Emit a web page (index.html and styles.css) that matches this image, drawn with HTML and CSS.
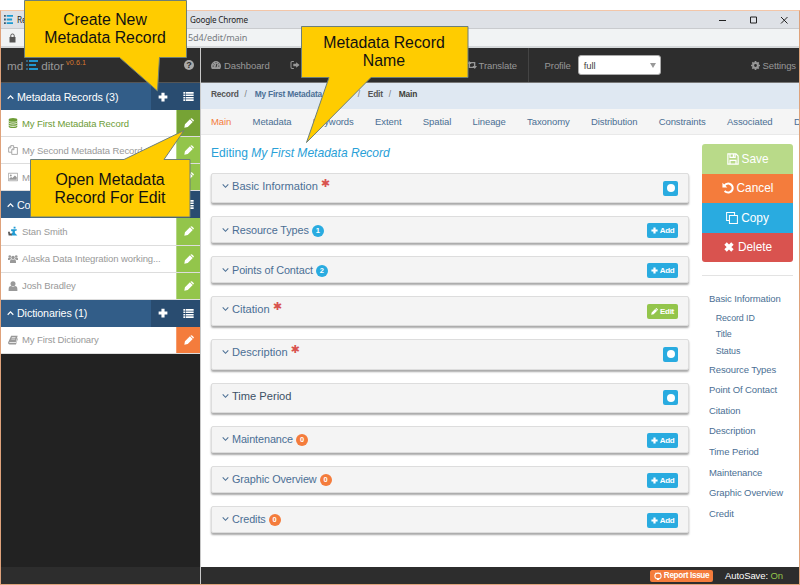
FILE: index.html
```
<!DOCTYPE html>
<html lang="en">
<head>
<meta charset="utf-8">
<title>mdEditor</title>
<link rel="stylesheet" href="styles.css">
</head>
<body>
<svg class="defs" aria-hidden="true">
  <symbol id="plus" viewBox="0 0 16 16"><path d="M5.500 1h5v4.500H15v5h-4.500V15h-5v-4.500H1v-5h4.500z"/></symbol>
  <symbol id="list" viewBox="0 0 16 14"><path d="M0 0h3v2.600H0zM4 0h12v2.600H4zM0 3.800h3v2.600H0zM4 3.800h12v2.600H4zM0 7.600h3v2.600H0zM4 7.600h12v2.600H4zM0 11.400h3V14H0zM4 11.400h12V14H4z"/></symbol>
  <symbol id="pencil" viewBox="0 0 16 16"><path d="M.5 15.500l1-5.500 8-8 4.500 4.500-8 8zM10.300 1.300l.8-.7q.9-.8 1.800 0l2.500 2.500q.8.900 0 1.800l-.7.800z"/></symbol>
  <symbol id="up" viewBox="0 0 10 8"><path d="M1 6.500L5 2.500l4 4" fill="none" stroke="currentColor" stroke-width="1.700"/></symbol>
  <symbol id="down" viewBox="0 0 10 8"><path d="M1 1.800L5 5.800l4-4" fill="none" stroke="currentColor" stroke-width="1.500"/></symbol>
  <symbol id="db" viewBox="0 0 16 16"><path d="M1 3q0-3 7-3t7 3-7 3-7-3zM1 5q2 2 7 2t7-2v1.500q0 2.500-7 2.500t-7-2.500zM1 8.500q2 2 7 2t7-2V10q0 2.500-7 2.500T1 10zM1 12q2 2 7 2t7-2v1q0 3-7 3t-7-3z"/></symbol>
  <symbol id="files" viewBox="0 0 16 16"><path d="M4.500 1H9v3M6 11.500H1V4.500L4.500 1v3.500H1M9.500 4H15v11H6V7.500zV7.500H6" fill="none" stroke="currentColor" stroke-width="1.300"/></symbol>
  <symbol id="image" viewBox="0 0 16 14"><path d="M.6 1h14.800v12H.6z" fill="none" stroke="currentColor" stroke-width="1.200"/><circle cx="4.500" cy="4.500" r="1.500"/><path d="M2 11.500V9.500l3-2.500 2 1.500 4-4 3 3v4z"/></symbol>
  <symbol id="user" viewBox="0 0 14 16"><circle cx="7" cy="4.200" r="4"/><path d="M0 16v-3q0-5 4-5 3 2 6 0 4 0 4 5v3z"/></symbol>
  <symbol id="users" viewBox="0 0 20 16"><circle cx="10" cy="5" r="3.500"/><circle cx="3.500" cy="3" r="2.600"/><circle cx="16.500" cy="3" r="2.600"/><path d="M4 16v-3q0-4.500 3.500-4.500 2.500 1.500 5 0Q16 8.500 16 13v3zM0 10V7q0-1.500 2-1.500h3.500L6 8q-2.500.5-3 2zM20 10V7q0-1.500-2-1.500h-3.500L14 8q2.500.5 3 2z"/></symbol>
  <symbol id="book" viewBox="0 0 16 16"><path d="M5 1h10.500L12.500 11H3q-1.500 0-1 1.500h11L15 5l1 .7-3 8.500q-.3.800-1 .8H2.500Q-.5 14.500.3 11.500z"/><path d="M6 4h6M5.300 6.500h6" stroke="#fff"/></symbol>
  <symbol id="gear" viewBox="0 0 16 16"><circle cx="8" cy="8" r="4.300" fill="none" stroke="currentColor" stroke-width="3.600"/><path d="M8 0v3M8 13v3M0 8h3M13 8h3M2.300 2.300l2.200 2.200M11.500 11.500l2.200 2.200M2.300 13.700l2.200-2.200M11.500 4.500l2.200-2.200" stroke="currentColor" stroke-width="3"/></symbol>
</svg>

<div class="window">
  <header class="titlebar">
    <svg class="favicon" viewBox="0 0 10 10"><path d="M0 0h2v2H0zM0 4h2v2H0zM0 8h2v2H0z" fill="#39576c"/><path d="M3 0h7v2H3zM3 4h6v2H3zM3 8h7v2H3z" fill="#1d9bd1"/></svg>
    <span class="win-title">Record - mdEditor</span><span class="win-app">Google Chrome</span>
    <svg class="win-controls" viewBox="0 0 70 10"><path d="M0 5.500h7M31.500 2h6v6h-6zM62 2l6.500 6.500M68.500 2L62 8.500" fill="none" stroke="#222"/></svg>
  </header>
  <div class="address">
    <svg class="lock" viewBox="0 0 8 10"><path d="M1 4h6v5.500H1z" fill="#555"/><path d="M2.300 4V2.500q0-1.500 1.700-1.500t1.700 1.500V4" fill="none" stroke="#555"/></svg>
    <span class="url">5d4/edit/main</span>
  </div>

  <div class="app">
    <aside class="sidebar">
      <div class="brand"><span>md</span>
        <svg class="logo" viewBox="0 0 12 12"><path d="M0 1h2v2H0zM0 5h2v2H0zM0 9h2v2H0z" fill="#36657f"/><path d="M3 1h9v2H3zM3 5h7v2H3zM3 9h9v2H3z" fill="#2295cc"/></svg>
        <span>ditor</span><sup>v0.6.1</sup><span class="help">?</span></div>

      <div class="group"><svg><use href="#up"/></svg><h2>Metadata Records (3)</h2><div class="tools"><svg class="add"><use href="#plus"/></svg><svg class="lst"><use href="#list"/></svg></div></div>
      <div class="row active"><svg><use href="#db"/></svg><span>My First Metadata Record</span><a class="pen"><svg><use href="#pencil"/></svg></a></div>
      <div class="row"><svg><use href="#files"/></svg><span>My Second Metadata Record</span><a class="pen"><svg><use href="#pencil"/></svg></a></div>
      <div class="row"><svg><use href="#image"/></svg><span>My Third Metadata Record</span><a class="pen"><svg><use href="#pencil"/></svg></a></div>

      <div class="group"><svg><use href="#up"/></svg><h2>Contacts (3)</h2><div class="tools"><svg class="add"><use href="#plus"/></svg><svg class="lst"><use href="#list"/></svg></div></div>
      <div class="row"><svg viewBox="0 0 16 16"><path d="M9 1h3v3H9zM5 5h9v2l-3 1v3l4 4H5v-2l3-4-3-1z" fill="#209bd3"/><path d="M0 9h3v3h3v3H1z" fill="#555"/></svg><span>Stan Smith</span><a class="pen"><svg><use href="#pencil"/></svg></a></div>
      <div class="row"><svg><use href="#users"/></svg><span>Alaska Data Integration working...</span><a class="pen"><svg><use href="#pencil"/></svg></a></div>
      <div class="row"><svg><use href="#user"/></svg><span>Josh Bradley</span><a class="pen"><svg><use href="#pencil"/></svg></a></div>

      <div class="group"><svg><use href="#up"/></svg><h2>Dictionaries (1)</h2><div class="tools"><svg class="add"><use href="#plus"/></svg><svg class="lst"><use href="#list"/></svg></div></div>
      <div class="row"><svg><use href="#book"/></svg><span>My First Dictionary</span><a class="pen orange"><svg><use href="#pencil"/></svg></a></div>
      <div class="side-footer"></div>
    </aside>

    <main class="main">
      <nav class="navbar">
        <a><svg viewBox="0 0 18 14"><path d="M1.500 14Q0 12 0 9 0 5 3 2.500T9 0t6 2.500T18 9q0 3-1.500 5z"/><path d="M9 11l1.500-6M3 9h2M4.500 4.500l1.400 1.400M9 2v1.500M13.500 4.500l-1 1M13 9h2" stroke="#2d2d2d" stroke-width="1.700"/></svg>Dashboard</a>
        <a class="export"><svg viewBox="0 0 16 14"><path d="M6 1H3Q1 1 1 3v8q0 2 2 2h3" fill="none" stroke="currentColor" stroke-width="1.800"/><path d="M5 5h5V2l6 5-6 5V9H5z"/></svg>Export</a>
        <a class="import">Import</a>
        <a class="publish">Publish</a>
        <a class="translate"><svg viewBox="0 0 18 14"><path d="M4 0l4 5H5.500v5H11l2 2.500H3V5H0zM5 1.500h10V9h3l-4 5-4-5h2.500V4H7z"/></svg>Translate</a>
        <div class="profile">Profile <div class="select">full<i></i></div></div>
        <a class="settings"><svg><use href="#gear"/></svg>Settings</a>
      </nav>
      <div class="crumbs"><b>Record</b><i>/</i><b class="link">My First Metadata Record</b><i>/</i><b>Edit</b><i>/</i><b class="now">Main</b></div>
      <div class="tabs"><a class="on">Main</a><a>Metadata</a><a>Keywords</a><a>Extent</a><a>Spatial</a><a>Lineage</a><a>Taxonomy</a><a>Distribution</a><a>Constraints</a><a>Associated</a><a>Documents</a></div>

      <div class="content">
        <section class="editor">
          <h1>Editing <em>My First Metadata Record</em></h1>
          <div class="card tall"><svg><use href="#down"/></svg><h3>Basic Information</h3><b class="req">✱</b><a class="btn dot"><i></i></a></div>
          <div class="card"><svg><use href="#down"/></svg><h3>Resource Types</h3><span class="badge">1</span><a class="btn"><svg><use href="#plus"/></svg>Add</a></div>
          <div class="card"><svg><use href="#down"/></svg><h3>Points of Contact</h3><span class="badge">2</span><a class="btn"><svg><use href="#plus"/></svg>Add</a></div>
          <div class="card tall"><svg><use href="#down"/></svg><h3>Citation</h3><b class="req">✱</b><a class="btn edit"><svg><use href="#pencil"/></svg>Edit</a></div>
          <div class="card tall"><svg><use href="#down"/></svg><h3>Description</h3><b class="req">✱</b><a class="btn dot"><i></i></a></div>
          <div class="card tall"><svg><use href="#down"/></svg><h3 class="dark">Time Period</h3><a class="btn dot"><i></i></a></div>
          <div class="card"><svg><use href="#down"/></svg><h3>Maintenance</h3><span class="badge zero">0</span><a class="btn"><svg><use href="#plus"/></svg>Add</a></div>
          <div class="card"><svg><use href="#down"/></svg><h3>Graphic Overview</h3><span class="badge zero">0</span><a class="btn"><svg><use href="#plus"/></svg>Add</a></div>
          <div class="card"><svg><use href="#down"/></svg><h3>Credits</h3><span class="badge zero">0</span><a class="btn"><svg><use href="#plus"/></svg>Add</a></div>
        </section>

        <aside class="actions">
          <div class="stack">
            <a class="save"><svg viewBox="0 0 14 14"><path d="M1 1h9.500L13 3.500V13H1zM3.500 1v4h6V1M3.500 13V8.500h7V13M7.500 1.500v3" fill="none" stroke="currentColor" stroke-width="1.400"/></svg>Save</a>
            <a class="cancel"><svg viewBox="0 0 14 14"><path d="M2.500 4.500Q5 1.200 8.500 2q4 1.200 4 5t-3.700 5Q5.500 12.800 3 10.500" fill="none" stroke="currentColor" stroke-width="2.300"/><path d="M.5.800v5.700h5.700z"/></svg>Cancel</a>
            <a class="copy"><svg viewBox="0 0 14 14"><path d="M4 4h9.300v9.300H4zM4 10H.7V.7H10V4" fill="none" stroke="currentColor" stroke-width="1.200"/></svg>Copy</a>
            <a class="delete"><svg viewBox="0 0 14 14"><path d="M3 3l8 8M11 3l-8 8" stroke="currentColor" stroke-width="4"/></svg>Delete</a>
          </div>
          <ul class="toc">
            <li>Basic Information</li>
            <li class="sub">Record ID</li><li class="sub">Title</li><li class="sub">Status</li>
            <li>Resource Types</li><li>Point Of Contact</li><li>Citation</li><li>Description</li><li>Time Period</li><li>Maintenance</li><li>Graphic Overview</li><li>Credit</li>
          </ul>
        </aside>
      </div>

      <footer class="footer">
        <a class="report"><svg viewBox="0 0 14 14"><path d="M5 12Q1.500 10.500 1.500 7.300q0-5.300 5.500-5.300t5.500 5.300q0 3.200-3.500 4.700" fill="none" stroke="currentColor" stroke-width="1.900"/><path d="M2.200 1l3 1.300L3 4.500zM11.800 1l-3 1.300L11 4.500zM5 10.500h4V14H5z"/></svg>Report Issue</a>
        <span>AutoSave: <em>On</em></span>
      </footer>
    </main>
  </div>
</div>

<div class="callout c1"><svg viewBox="0 0 164 92"><path d="M.5.500h162v57H135.500L133.500 91 95.500 57.500H.5z"/></svg><p>Create New<br>Metadata Record</p></div>
<div class="callout c2"><svg viewBox="0 0 168 118"><path d="M.5.500h166.500v51H70L5.500 116.500 28 51.500H.5z"/></svg><p>Metadata Record<br>Name</p></div>
<div class="callout c3"><svg viewBox="0 0 162 88"><path d="M.5 29.500H94L154 .5 134 29.500h26V87H.5z"/></svg><p>Open Metadata<br>Record For Edit</p></div>
</body>
</html>
```
FILE: styles.css
```
* { box-sizing: border-box; }
body { margin: 0; width: 800px; height: 585px; overflow: hidden; position: relative; background: #fff; padding-top: 10px; font-family: "Liberation Sans", Arial, sans-serif; font-size: 9.500px; letter-spacing: -.1px; }
svg { fill: currentColor; flex: none; display: block; }
.defs { position: absolute; width: 0; height: 0; }
h1, h2, h3, p, ul { margin: 0; padding: 0; font-weight: normal; }

.window { height: 575px; border: 1px solid #dfa27b; border-top-color: #f3c6a8; display: flex; flex-direction: column; overflow: hidden; }
.titlebar { height: 18px; flex: none; background: #dee1e6; border-bottom: 1px solid #c9cbce; display: flex; align-items: center; padding: 0 10px 0 3px; font: 8.100px "Noto Sans", sans-serif; color: #222; letter-spacing: -.15px; }
.favicon { width: 9px; height: 9px; margin-right: 4px; }
.win-title { width: 173px; overflow: hidden; white-space: nowrap; }
.win-app { white-space: nowrap; }
.win-controls { width: 70px; height: 10px; margin-left: auto; }
.address { height: 19px; flex: none; background: #f1f3f4; border-bottom: 2px solid #d5d8da; display: flex; align-items: center; padding-left: 7px; font: 9.100px "Noto Sans", sans-serif; color: #777b80; }
.lock { width: 9px; height: 10px; }
.url { margin-left: 171px; }

.app { flex: 1; display: flex; min-height: 0; }
.sidebar { width: 200px; flex: none; background: #222; border-right: 1px solid #c8c8c8; display: flex; flex-direction: column; }
.brand { height: 35px; flex: none; background: #2d2d2d; color: #999; display: flex; align-items: center; padding: 0 6px; font-size: 11.700px; letter-spacing: 0; border-bottom: 1px solid #555; }
.logo { width: 12px; height: 12px; margin: 0 3px; }
.brand sup { font-size: 7.200px; color: #d9782e; align-self: flex-start; margin: 11px 0 0 2px; line-height: 8px; letter-spacing: .1px; }
.help { width: 10px; height: 10px; border-radius: 50%; background: #aaa; color: #2d2d2d; font-weight: bold; font-size: 9px; line-height: 10px; text-align: center; margin-left: auto; }
.group { height: 27px; flex: none; background: #325d88; color: #fff; display: flex; align-items: center; padding-left: 6px; }
.group > svg { width: 7px; height: 6px; margin-right: 3px; }
.group h2 { font-size: 10.700px; white-space: nowrap; }
.tools { width: 49px; height: 27px; margin-left: auto; background: #294c70; display: flex; align-items: center; gap: 15px; padding-left: 7px; }
.add { width: 10px; height: 10px; }
.lst { width: 11px; height: 9px; }
.row { height: 27.150px; flex: none; background: #fff; border-bottom: 1px solid #ddd; color: #999; display: flex; align-items: center; padding-left: 7px; }
.row > svg { width: 10px; height: 10px; margin-right: 4px; }
.row span { white-space: nowrap; }
.row.active { color: #6d9c36; }
.pen { width: 24px; height: 26.150px; margin-left: auto; background: #93c54b; color: #fff; display: flex; align-items: center; justify-content: center; flex: none; border-left: 1px solid #b5d783; }
.active .pen { background: #76a335; }
.pen.orange { background: #f47c3c; border-color: #f79c6c; }
.pen svg { width: 10px; height: 10px; }
.side-footer { height: 17px; margin-top: auto; background: #2d2d2d; }

.main { flex: 1; min-width: 0; display: flex; flex-direction: column; background: #fff; }
.navbar { height: 35px; flex: none; background: #2d2d2d; color: #989898; display: flex; align-items: center; padding: 0 3px 0 10px; border-bottom: 1px solid #777; }
.navbar a { display: flex; align-items: center; gap: 3px; white-space: nowrap; }
.navbar a svg { width: 10px; height: 8px; }
.export { width: 54px; margin-left: 20px; }
.import { width: 56px; }
.publish { width: 67px; }
.navbar .translate { width: 61px; gap: 2px; }
.profile { border-left: 1px solid #444; height: 34px; display: flex; align-items: center; padding-left: 16px; gap: 7px; }
.select { width: 83px; height: 20px; background: #fff; border: 1px solid #aaa; border-radius: 3px; color: #444; display: flex; align-items: center; justify-content: space-between; padding: 0 4px 0 5px; }
.select i { border: 3px solid transparent; border-top: 5px solid #999; border-bottom: 0; }
.navbar .settings { margin-left: auto; gap: 2px; }
.navbar .settings svg { width: 9px; height: 9px; }
.crumbs { height: 26px; flex: none; background: #dfe8f2; display: flex; align-items: center; padding: 0 10px 4px; font-size: 8.400px; letter-spacing: -.2px; color: #555; white-space: nowrap; }
.crumbs i { width: 16px; text-align: center; color: #777; font-style: normal; padding-right: 2px; }
.crumbs .link { color: #4c7096; }
.crumbs .now { color: #3e3f3a; }
.tabs { height: 26px; flex: none; background: #f5f5f5; border-bottom: 1px solid #e9e9e9; display: flex; align-items: center; gap: 21.400px; padding-left: 10px; color: #4b6f94; overflow: hidden; white-space: nowrap; }
.tabs .on { color: #f47c3c; }

.content { flex: 1; display: flex; min-height: 0; padding: 0 6px 0 10px; gap: 13px; }
.editor { width: 478px; display: flex; flex-direction: column; gap: 12.900px; }
h1 { height: 25px; font-size: 12.050px; letter-spacing: 0; color: #29a0d7; padding-top: 11px; line-height: 15px; white-space: nowrap; }
.card { height: 27px; flex: none; display: flex; align-items: center; padding: 0 10px; background: #f4f4f4; border: 1px solid #ddd; border-radius: 2px; box-shadow: 0 2px 2px rgba(0,0,0,.34); color: #4b6f94; }
.card.tall { height: 30.400px; }
.card > svg { width: 7px; height: 6px; margin-right: 3px; }
h3 { font-size: 10.850px; white-space: nowrap; line-height: 14px; }
.tall h3 { font-size: 11.120px; letter-spacing: 0; }
.tall h3, .tall > svg, .tall .req { position: relative; top: -2px; }
.tall h3.dark { color: #3c5166; }
.card .req { color: #d9534f; font: bold 11px "DejaVu Sans", sans-serif; margin-left: 3px; top: -5px; }
.badge { width: 12px; height: 12px; border-radius: 50%; margin: 2px 0 0 3px; background: #29abe0; color: #fff; font-weight: bold; font-size: 7.500px; line-height: 12px; text-align: center; }
.badge.zero { background: #f47c3c; }
.btn { width: 31px; height: 15px; margin: 2px 0 0 auto; background: #29abe0; color: #fff; border-radius: 2px; display: flex; align-items: center; justify-content: center; gap: 2px; font-size: 8px; letter-spacing: -.3px; font-weight: bold; }
.btn svg { width: 7px; height: 7px; }
.btn.dot { width: 15px; margin-top: 0; }
.btn.dot i { width: 8px; height: 8px; border-radius: 50%; background: #fff; }
.btn.edit { background: #93c54b; margin-top: 0; }

.actions { width: 91px; padding-top: 9px; }
.stack { border-radius: 3px; overflow: hidden; color: #fff; font-size: 11.850px; letter-spacing: 0; }
.stack a { height: 29.500px; display: flex; align-items: center; justify-content: center; gap: 3px; }
.stack svg { width: 12px; height: 12px; }
.save { background: #b9da89; }
.cancel { background: #f47c3c; }
.copy { background: #29abe0; }
.delete { background: #d9534f; }
.toc { list-style: none; border-top: 1px solid #e3e3e3; margin-top: 13px; padding: 13px 0 0 7px; color: #4b6f94; white-space: nowrap; }
.toc li { height: 20.600px; line-height: 20.600px; }
.toc .sub { height: 16.700px; line-height: 16.700px; padding-left: 6.700px; font-size: 8.900px; }

.footer { height: 17px; flex: none; background: #2d2d2d; color: #fff; display: flex; align-items: center; justify-content: flex-end; gap: 12px; padding-right: 16px; }
.footer em { color: #93c54b; font-style: normal; }
.report { width: 63px; height: 12px; background: #f47c3c; border-radius: 2px; display: flex; align-items: center; justify-content: center; gap: 2px; font-weight: bold; font-size: 8.200px; letter-spacing: -.35px; white-space: nowrap; }
.report svg { width: 8px; height: 8px; }

.callout { position: absolute; color: #111; font-size: 15.850px; letter-spacing: 0; line-height: 18px; text-align: center; }
.callout svg { position: absolute; left: 0; top: 0; width: 100%; height: 100%; fill: #fc0; stroke: #6d7f78; }
.callout p { position: relative; left: -1px; }
.c1 { left: 24px; top: 0; width: 164px; height: 92px; padding-top: 11px; }
.c2 { left: 301px; top: 26px; width: 168px; height: 118px; padding-top: 8px; }
.c3 { left: 30px; top: 130px; width: 162px; height: 88px; padding-top: 41px; }
```
